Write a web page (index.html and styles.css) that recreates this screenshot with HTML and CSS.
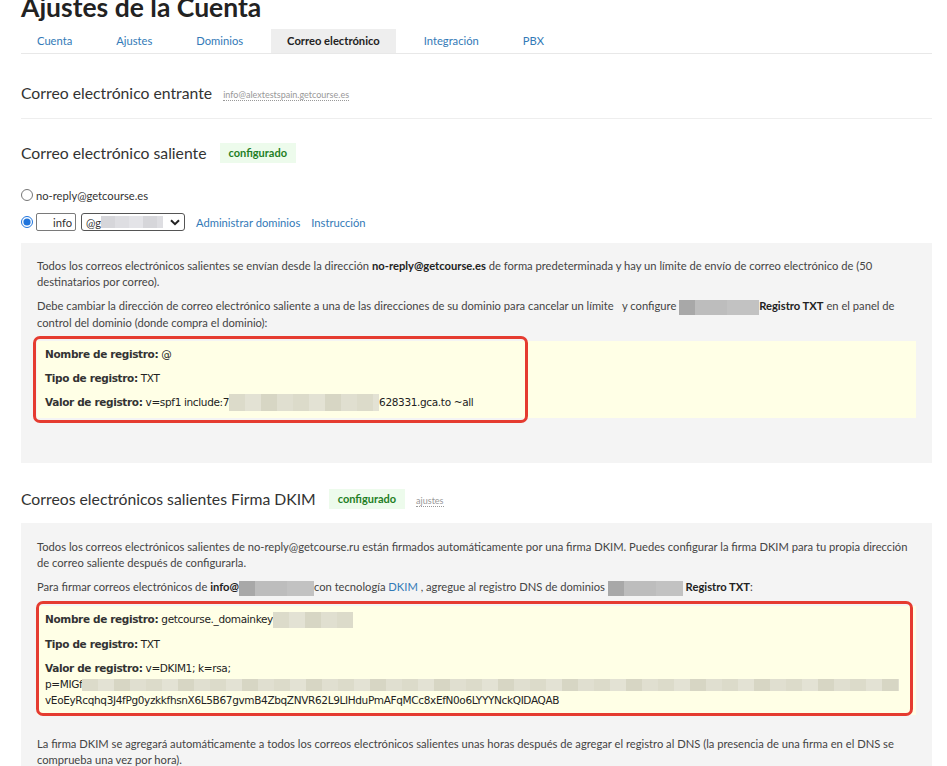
FILE: index.html
```html
<!DOCTYPE html>
<html lang="es">
	<head>
		<meta charset="UTF-8" />
		<meta name="viewport" content="width=device-width, initial-scale=1.0" />
		<title>Ajustes de la Cuenta</title>
		<link rel="stylesheet" href="styles.css">
	</head>
	<body>
		<div class="page">
			<h1 class="page-title">Ajustes de la Cuenta</h1>
			<ul class="tabs">
				<li><a href="#">Cuenta</a></li>
				<li><a href="#">Ajustes</a></li>
				<li><a href="#">Dominios</a></li>
				<li class="active"><a href="#">Correo electrónico</a></li>
				<li><a href="#">Integración</a></li>
				<li><a href="#">PBX</a></li>
			</ul>

			<div class="section section-divided">
				<h3 class="section-title">Correo electrónico entrante <span class="hint">info@alextestspain.getcourse.es</span></h3>
			</div>

			<div class="section">
				<h3 class="section-title">Correo electrónico saliente <span class="badge-ok">configurado</span></h3>
				<label class="radio-row first"><input type="radio" name="from" /> no-reply@getcourse.es</label>
				<div class="radio-row">
					<input type="radio" name="from" checked />
					<input class="local-part" type="text" value="info" />
					<div class="fake-select">
						<span>@g</span><span class="blur blur-light"></span>
						<svg class="chevron" width="10" height="7" viewBox="0 0 10 7"><path d="M1 1.2 L5 5.2 L9 1.2" fill="none" stroke="#222" stroke-width="2" /></svg>
					</div>
					<a href="#" class="link">Administrar dominios</a>
					<a href="#" class="link">Instrucción</a>
				</div>
			</div>

			<div class="note note-spf">
				<p>Todos los correos electrónicos salientes se envían desde la dirección <b>no-reply@getcourse.es</b> de forma predeterminada y hay un límite de envío de correo electrónico de (50 destinatarios por correo).</p>
				<p>Debe cambiar la dirección de correo electrónico saliente a una de las direcciones de su dominio para cancelar un límite &nbsp; y configure <span class="blur blur-gray w-txt"></span><b>Registro TXT</b> en el panel de control del dominio (donde compra el dominio):</p>
				<div class="record">
					<div class="record-line"><b>Nombre de registro:</b> @</div>
					<div class="record-line"><b>Tipo de registro:</b> TXT</div>
					<div class="record-line"><b>Valor de registro:</b> v=spf1 include:7<span class="blur blur-beige w-spf"></span>628331.gca.to ~all</div>
					<div class="marker marker-spf"></div>
				</div>
			</div>

			<div class="section section-dkim">
				<h3 class="section-title">Correos electrónicos salientes Firma DKIM <span class="badge-ok">configurado</span> <span class="hint">ajustes</span></h3>
			</div>

			<div class="note note-dkim">
				<p>Todos los correos electrónicos salientes de no-reply@getcourse.ru están firmados automáticamente por una firma DKIM. Puedes configurar la firma DKIM para tu propia dirección de correo saliente después de configurarla.</p>
				<p>Para firmar correos electrónicos de <b>info@</b><span class="blur blur-gray w-mail"></span>con tecnología <a href="#" class="link">DKIM</a> , agregue al registro DNS de dominios <span class="blur blur-gray w-dom"></span> <b>Registro TXT</b>:</p>
				<div class="record">
					<div class="record-line"><b>Nombre de registro:</b> getcourse._domainkey<span class="blur blur-beige w-key"></span></div>
					<div class="record-line"><b>Tipo de registro:</b> TXT</div>
					<div class="record-line"><b>Valor de registro:</b> v=DKIM1; k=rsa;<br />p=MIGf<span class="blur blur-beige w-pub"></span><br />vEoEyRcqhq3J4fPg0yzkkfhsnX6L5B67gvmB4ZbqZNVR62L9LIHduPmAFqMCc8xEfN0o6LYYYNckQIDAQAB</div>
					<div class="marker marker-dkim"></div>
				</div>
				<p class="after">La firma DKIM se agregará automáticamente a todos los correos electrónicos salientes unas horas después de agregar el registro al DNS (la presencia de una firma en el DNS se comprueba una vez por hora).</p>
			</div>
		</div>
	</body>
</html>
```

FILE: styles.css
```css
* {
	box-sizing: border-box;
}
body {
	margin: 0;
	background: #fff;
	color: #444;
	font-family: Lato, "Open Sans", sans-serif;
	font-size: 11.2px;
}
.page {
	padding: 0 15px 0 21px;
}
.page-title {
	margin: -9px 0 0;
	font-size: 26.5px;
	line-height: 32px;
	font-weight: 700;
	color: #222;
}
.tabs {
	display: flex;
	gap: 12px;
	margin: 6px 0 0;
	padding: 0;
	list-style: none;
	border-bottom: 1px solid #e8e8e8;
}
.tabs a {
	display: block;
	padding: 0 16px;
	line-height: 24px;
	color: #337ab7;
	text-decoration: none;
}
.tabs .active a {
	background: #eee;
	color: #222;
	font-weight: 700;
}
.section {
	padding-top: 29px;
}
.section-divided {
	padding-bottom: 15px;
	border-bottom: 1px solid #eee;
}
.section-title {
	display: flex;
	align-items: center;
	gap: 13px;
	margin: 0;
	font-size: 15.75px;
	line-height: 20px;
	font-weight: 400;
	color: #333;
}
.section-divided + .section {
	padding-top: 24px;
}
.hint {
	font-size: 9px;
	line-height: 11px;
	color: #999;
	border-bottom: 1px dotted #999;
	margin: 3px 0 0 -2px;
}
.badge-ok {
	display: inline-block;
	padding: 0 9px;
	line-height: 20px;
	font-size: 11px;
	font-weight: 700;
	color: #1f7f25;
	background: #edfbec;
}
.radio-row {
	display: flex;
	align-items: center;
	height: 18px;
	margin-top: 9px;
	color: #333;
}
.radio-row.first {
	margin-top: 23px;
}
.radio-row input[type="radio"] {
	width: 12px;
	height: 12px;
	margin: 0 3px 0 0;
	accent-color: #1f74dc;
}
.local-part {
	width: 40px;
	height: 18px;
	margin: 0 5px 0 0;
	padding: 0 3px;
	border: 1px solid #7a7a7a;
	border-radius: 2px;
	font: inherit;
	color: #333;
	text-align: right;
}
.fake-select {
	display: flex;
	align-items: center;
	width: 104px;
	height: 18px;
	padding: 0 4px;
	border: 1px solid #555;
	border-radius: 3px;
	color: #333;
}
.fake-select .blur {
	width: 62px;
	height: 12px;
}
.chevron {
	margin-left: auto;
}
.link {
	color: #337ab7;
	text-decoration: none;
}
.radio-row .link {
	margin-left: 11px;
}
.blur {
	display: inline-block;
	vertical-align: middle;
}
.blur-light {
	background: repeating-linear-gradient(90deg, #d6d6da 0 14px, #dedee2 14px 28px, #e4e4e8 28px 42px);
}
.blur-gray {
	height: 15px;
	background: linear-gradient(90deg, #a8a8a8 0 16px, #bdbdbd 16px 48px, #c2c2c2 48px);
}
.blur-beige {
	height: 17px;
	background: repeating-linear-gradient(90deg, #dcdbca 0 16px, #e3e2d4 16px 32px, #d7d6c4 32px 48px, #e0dfd0 48px 64px);
}
.w-txt { width: 80px; }
.w-mail { width: 75px; }
.w-dom { width: 75px; }
.w-spf { width: 150px; }
.w-key { width: 80px; height: 16px; }
.w-pub { width: 817px; height: 12px; }
.note {
	background: #f4f4f4;
	padding: 15px 16px 16px;
	margin-top: 12px;
}
.note p {
	margin: 0 0 8px;
	line-height: 16px;
}
.note b {
	color: #222;
}
.note-spf {
	padding-bottom: 45px;
}
.section-dkim {
	padding-top: 26px;
}
.note-dkim {
	margin-top: 14px;
	padding-top: 16px;
}
.record {
	position: relative;
	margin-top: 10px;
	padding: 5px 8px 7px;
	background: #ffffe6;
	font-family: "DejaVu Sans", Verdana, sans-serif;
	font-size: 10.5px;
	letter-spacing: -0.35px;
	color: #222;
}
.record-line {
	line-height: 16px;
	white-space: nowrap;
}
.record-line + .record-line {
	margin-top: 8px;
}
.record b {
	color: #333;
}
.marker {
	position: absolute;
	border: 3px solid #e53b30;
	border-radius: 7px;
}
.marker-spf {
	left: -4px;
	top: -5px;
	width: 495px;
	height: 87px;
}
.marker-dkim {
	left: -1px;
	top: -5px;
	width: 877px;
	height: 115px;
}
.note p.after {
	margin-top: 21px;
}
```
